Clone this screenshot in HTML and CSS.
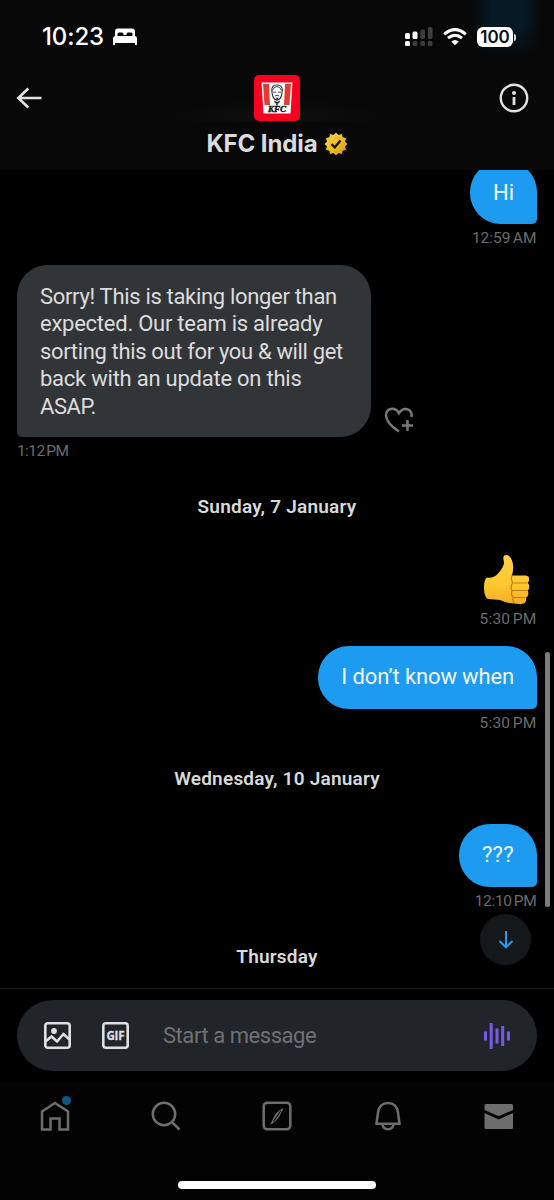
FILE: index.html
```
<!DOCTYPE html>
<html lang="en">
<head>
<meta charset="utf-8">
<title>KFC India</title>
<link rel="stylesheet" href="styles.css">
</head>
<body>
<div class="phone">
  <header class="header">
    <div class="status">
      <span class="clock">10:23</span>
      <svg class="bed" width="26" height="20" viewBox="0 0 26 20"><path d="M3 9V4.500Q3 1.500 6 1.500H20Q23 1.500 23 4.500V9H20.500V7Q20.500 5.500 19 5.500H16Q14.500 5.500 14.500 7V8H11.500V7Q11.500 5.500 10 5.500H7Q5.500 5.500 5.500 7V9ZM3.500 9H22.500Q25 9 25 11.500V17.500Q25 18.300 24 18.300T23 17.500V16H3V17.500Q3 18.300 2 18.300T1 17.500V11.500Q1 9 3.500 9Z" fill="#fff"/></svg>
      <svg class="signal" width="29" height="20" viewBox="0 0 29 20"><g fill="#fff"><rect x="1" y="6" width="5" height="6" rx="1.500"/><rect x="8.500" y="4.500" width="5" height="7.500" rx="1.500"/><rect x="1" y="14" width="5" height="5" rx="1.500"/></g><g fill="#3d3d3e"><rect x="16.300" y="2.500" width="4.700" height="9.500" rx="1.500"/><rect x="23.800" y="0" width="4.700" height="12" rx="1.500"/><rect x="8.700" y="14" width="4.700" height="5" rx="1.500"/><rect x="16.300" y="14" width="4.700" height="5" rx="1.500"/><rect x="23.800" y="14" width="4.700" height="5" rx="1.500"/></g></svg>
      <svg class="wifi" width="24" height="18" viewBox="0 0 24 18"><g fill="none" stroke="#fff" stroke-width="3"><path d="M1.200 6.300Q12 -3 22.800 6.300"/><path d="M5 10.200Q12 4.200 19 10.200"/></g><path d="M12 17.300L8.200 13.500Q12 10.500 15.800 13.500Z" fill="#fff"/></svg>
      <span class="battery">100</span><span class="battery-tip"></span>
    </div>
    <div class="titlebar">
      <svg class="back" width="26" height="22" viewBox="0 0 26 22"><path d="M12.300 1.500L2.300 11L12.300 20.500M2.500 11H25.500" fill="none" stroke="#e2e2e2" stroke-width="2.600"/></svg>
      <svg class="avatar" width="46" height="46" viewBox="0 0 46 46"><rect width="46" height="46" rx="5" fill="#f90020"/><path d="M7.500 7.500H38.500L36.500 38.500H9.500Z" fill="#fff"/><path d="M9 9H15L16 30H10.500ZM31 9H37L35.500 30H30Z" fill="#e43b32"/><path d="M17.800 15.500Q17.500 10 23 10T28.300 15.500L27.500 20.500Q26 25 23 25T18.500 20.500Z" fill="#fff" stroke="#253238" stroke-width="1.100"/><path d="M18.500 15.500Q20 11.500 23 11.500T27.500 15.500M19.200 17.200H22M24 17.200H26.800M20.800 21Q23 19.500 25.200 21M22.200 23H23.800L23 25.500Z" fill="none" stroke="#253238" stroke-width=".9"/><path d="M20 25.500L23 27L26 25.500L25 28.500L23.800 28V30.500H22.200V28L21 28.500Z" fill="#18252b"/><text x="23" y="37.300" text-anchor="middle" textLength="18" lengthAdjust="spacingAndGlyphs" class="logo-word">KFC</text></svg>
      <svg class="info" width="30" height="30" viewBox="0 0 30 30"><circle cx="15" cy="15" r="13.200" fill="none" stroke="#e2e2e2" stroke-width="2.400"/><circle cx="15" cy="10" r="2" fill="#e2e2e2"/><path d="M15 14V22" stroke="#e2e2e2" stroke-width="2.800"/></svg>
    </div>
    <div class="name">
      <span>KFC India</span>
      <svg width="24" height="24" viewBox="0 0 24 24"><defs><linearGradient id="gold" x1="0" y1="0" x2="1" y2="1"><stop offset="0" stop-color="#f3d34f"/><stop offset=".5" stop-color="#eebd27"/><stop offset="1" stop-color="#cf941b"/></linearGradient></defs><path d="M12 .5L14.500 3L17.800 2L18.700 5.300L22 6.200L21 9.500L23.500 12L21 14.500L22 17.800L18.700 18.700L17.800 22L14.500 21L12 23.500L9.500 21L6.200 22L5.300 18.700L2 17.800L3 14.500L.5 12L3 9.500L2 6.200L5.300 5.300L6.200 2L9.500 3Z" fill="url(#gold)"/><path d="M7.500 12.200L10.800 15.300L16.500 8.500" fill="none" stroke="#17130a" stroke-width="2.300"/></svg>
    </div>
  </header>

  <main class="chat">
    <div class="bubble sent">Hi</div>
    <time class="stamp right t-long">12:59 AM</time>

    <div class="received-row">
      <div class="bubble received"><span class="l1">Sorry! This is taking longer than</span><br><span class="l2">expected. Our team is already</span><br><span class="l3">sorting this out for you &amp; will get</span><br><span class="l4">back with an update on this</span><br><span class="l5">ASAP.</span></div>
      <svg class="react" width="30" height="28" viewBox="0 0 30 28"><path d="M15 24.500C9 20.500 2 14.500 2 8.200C2 1 11 -0.500 15 6C19 -0.500 28.800 1 27.500 10" fill="none" stroke="#77797c" stroke-width="2.500"/><path d="M23.500 13V24M18 18.500H29" stroke="#77797c" stroke-width="2.500"/></svg>
    </div>
    <time class="stamp t-short">1:12 PM</time>

    <div class="day">Sunday, 7 January</div>
    <svg class="thumb" width="48" height="52" viewBox="0 0 48 52"><defs><linearGradient id="skin" x1="0" y1="0" x2="0" y2="1"><stop offset="0" stop-color="#ffd34a"/><stop offset=".6" stop-color="#fec82f"/><stop offset="1" stop-color="#f5ac24"/></linearGradient></defs><path d="M4 23.500Q9 24.500 13 21.500Q19 16 21 10Q21 7 20.300 4.500Q20 1 23.500 1Q27 1 28.800 6Q31.500 12 29 21.500H43Q46.500 22 46 26Q46 28 44.500 29Q47 30.500 46 34Q46 36 44.500 36.500Q46 39 45 41.500Q44.500 43 43 43.500Q44 46 42 48.500Q40.500 50 36 50L26 49Q21 48 17 46L5 45Q1 43 1 34Q1 25 4 23.500Z" fill="url(#skin)"/><path d="M29 21.500Q27.500 25 29.500 28.500M29.500 29H44M29 36.500H44M30 43.500H42.500M29.500 29Q27 33 29 36.500Q27.500 40 30 43.500Q29 46.500 31 49" fill="none" stroke="#c27c16" stroke-width="1.200"/></svg>
    <time class="stamp right">5:30 PM</time>

    <div class="bubble sent later wide">I don’t know when</div>
    <time class="stamp right">5:30 PM</time>

    <div class="day">Wednesday, 10 January</div>
    <div class="bubble sent marks">???</div>
    <time class="stamp right t-noon">12:10 PM</time>
    <div class="day">Thursday</div>

    <div class="scrollbar"></div>
    <div class="jump"><svg width="16" height="20" viewBox="0 0 16 20"><path d="M8 1V17M1.500 11L8 17.300L14.500 11" fill="none" stroke="#2f97ea" stroke-width="2"/></svg></div>
  </main>

  <section class="composer">
    <div class="field">
      <svg class="photo" width="27" height="27" viewBox="0 0 27 27"><rect x="1.300" y="1.300" width="24.400" height="24.400" rx="2.500" fill="none" stroke="#dfdfe2" stroke-width="2.600"/><circle cx="10" cy="9" r="2.900" fill="#dfdfe2"/><path d="M1.500 19.500L7.500 14.500L13 19.500L19.500 12L25.500 17.500" fill="none" stroke="#dfdfe2" stroke-width="2.600"/></svg>
      <svg class="gif" width="27" height="27" viewBox="0 0 27 27"><rect x="1.300" y="1.300" width="24.400" height="24.400" rx="2.500" fill="none" stroke="#dfdfe2" stroke-width="2.600"/><text x="13.500" y="17.500" text-anchor="middle" textLength="18" class="gif-word">GIF</text></svg>
      <span class="placeholder">Start a message</span>
      <svg class="voice" width="26" height="26" viewBox="0 0 26 26"><path d="M1.500 8.500V17.500M7.200 0V26M13 5.500V20.500M18.700 3V23M24.500 8.500V17.500" stroke="#775be8" stroke-width="3"/></svg>
    </div>
  </section>

  <nav class="tabs">
    <span class="tab"><svg width="30" height="30" viewBox="0 0 30 30"><path d="M2 10.500L15 2L28 10.500V28.500H19.500V17.500H10.500V28.500H2Z" fill="none" stroke="#6d6d6d" stroke-width="2.500"/></svg><i class="dot"></i></span>
    <span class="tab"><svg width="30" height="30" viewBox="0 0 30 30"><circle cx="13" cy="13" r="11.200" fill="none" stroke="#6d6d6d" stroke-width="2.500"/><path d="M20.800 20.800L28.500 28.500" stroke="#6d6d6d" stroke-width="2.600"/></svg></span>
    <span class="tab"><svg width="30" height="30" viewBox="0 0 30 30"><rect x="1.700" y="1.700" width="26.600" height="26.600" rx="3.500" fill="none" stroke="#6d6d6d" stroke-width="2.500"/><path d="M8 23.800L9.800 20.500C12.500 14 15.500 9 22 7L19.500 11C17 17 14 21 8 23.800Z" fill="#6d6d6d"/><path d="M11.500 20.500L18.800 9.800" stroke="#030303" stroke-width="1.100"/></svg></span>
    <span class="tab"><svg width="30" height="30" viewBox="0 0 30 30"><path d="M3.500 22.700L5 11.500C6 5 10 2 15 2S24 5 25 11.500L26.500 22.700Z" fill="none" stroke="#6d6d6d" stroke-width="2.500"/><path d="M9.200 23Q10.500 28.300 15 28.300T20.800 23" fill="none" stroke="#6d6d6d" stroke-width="2.500"/></svg></span>
    <span class="tab"><svg width="30" height="30" viewBox="0 0 30 30"><path d="M.5 9V4.500Q.5 3 2 3H27.500Q29 3 29 4.500V9L14.700 15.300ZM.5 12L14.700 18.500L29 12V26.500Q29 28 27.500 28H2Q.5 28 .5 26.500Z" fill="#6d6d6d"/></svg></span>
  </nav>
  <div class="home-area"><div class="home-bar"></div></div>
</div>
</body>
</html>
```
FILE: styles.css
```
* { box-sizing: border-box; }
body { margin: 0; background: #000; }
svg { display: block; flex: none; }
.phone {
  width: 554px; height: 1200px; overflow: hidden;
  display: flex; flex-direction: column;
  background: #000; color: #dedede;
  font-family: Roboto, "Liberation Sans", sans-serif;
}
.header {
  height: 170px; flex: none;
  background:
    linear-gradient(to bottom, transparent 0, transparent 25px, #080808 56px),
    linear-gradient(to right, transparent 472px, #061a26 492px, #061a26 522px, transparent 542px),
    #080808;
}
.status { display: flex; align-items: center; height: 74px; padding-left: 42px; }
.clock { font: 500 24px/28px Inter, sans-serif; letter-spacing: -.1px; color: #fff; width: 70px; white-space: nowrap; }
.signal { margin-left: 266px; }
.wifi { margin-left: 10px; }
.battery {
  margin-left: 10px; width: 36px; height: 20px; border-radius: 6px;
  background: #fff; color: #080f14; text-align: center;
  font: 600 17px/20px Inter, sans-serif;
}
.battery-tip { width: 2px; height: 7px; margin-left: 1px; border-radius: 0 3px 3px 0; background: #d4dbdf; }
.titlebar {
  display: flex; align-items: center; justify-content: space-between; height: 48px; padding: 0 25px 0 16px;
  background: radial-gradient(ellipse 110px 18px at 277px 42px, #0f0f0f, transparent);
}
.avatar { margin-left: 12px; }
.logo-word { font: italic 900 9px "Liberation Serif", serif; font-weight: 700; fill: #111; stroke: #111; stroke-width: .4px; }
.name {
  display: flex; justify-content: center; align-items: center; gap: 6px; height: 44px;
  font: 700 24px/44px Inter, sans-serif; letter-spacing: -.1px; color: #dcdcdc;
}
.chat {
  position: relative; height: 818px; flex: none; overflow: hidden;
  display: flex; flex-direction: column; padding: 0 17px;
}
.bubble { flex: none; font-size: 22px; line-height: 27.500px; white-space: nowrap; }
.sent {
  align-self: flex-end; height: 62.500px; padding: 17px 23px;
  border-radius: 31px 31px 5px 31px; background: #1d9bf0; color: #f4f8fb;
}
.sent:first-child { margin-top: -9px; padding-top: 18px; }
.later { margin-top: 13px; }
.wide { letter-spacing: -.14px; }
.marks { letter-spacing: .3px; }
.l1 { letter-spacing: -.32px; }
.l2 { letter-spacing: -.25px; }
.l3 { letter-spacing: -.35px; }
.l4 { letter-spacing: -.24px; }
.l5 { letter-spacing: -.4px; }
.stamp { flex: none; height: 28px; font-size: 15.500px; line-height: 28px; color: #6b6c6e; white-space: nowrap; word-spacing: -1.500px; letter-spacing: .2px; }
.right { align-self: flex-end; margin-right: .500px; }
.t-long { letter-spacing: 0; }
.t-short { letter-spacing: -.6px; }
.t-noon { letter-spacing: -.3px; }
.received-row { display: flex; align-items: flex-end; margin-top: 13.500px; flex: none; }
.received {
  width: 354px; height: 172px; padding: 17.500px 23px;
  border-radius: 31px 31px 31px 5px; background: #323538; color: #dcdcdd;
}
.react { margin: 0 0 2px 13px; }
.day { flex: none; height: 87.500px; text-align: center; font-size: 19px; font-weight: 600; letter-spacing: .22px; line-height: 84px; color: #d9d9d9; }
.thumb { align-self: flex-end; margin: 1.500px 6px -1px 0; }
.scrollbar { position: absolute; right: 4px; top: 482px; width: 5px; height: 255px; border-radius: 3px; background: #7d7d7d; }
.jump {
  position: absolute; right: 23px; top: 744px; width: 51px; height: 51px; border-radius: 50%;
  display: flex; align-items: center; justify-content: center; background: #15181b;
}
.composer { height: 94px; flex: none; border-top: 1px solid #1d1d1e; padding: 11px 17px 0; }
.field { display: flex; align-items: center; height: 71px; border-radius: 36px; background: #212428; padding: 0 27px; }
.gif { margin-left: 31px; }
.gif-word { font: 700 11.500px "Open Sans", sans-serif; fill: #dfdfe2; stroke: #dfdfe2; stroke-width: .3px; }
.placeholder { margin-left: 34px; flex: 1; font-size: 22px; line-height: 28px; letter-spacing: -.45px; color: #6f7276; white-space: nowrap; }
.tabs { height: 84px; flex: none; display: flex; background: #030303; padding: 19px 0 0; }
.tab { position: relative; width: 110.800px; display: flex; justify-content: center; }
.dot { position: absolute; top: -5px; left: 62px; width: 9px; height: 9px; border-radius: 50%; background: #125682; }
.home-area { height: 34px; flex: none; background: #030303; display: flex; justify-content: center; padding-top: 15px; }
.home-bar { width: 198px; height: 8px; border-radius: 4px; background: #fff; }
```
